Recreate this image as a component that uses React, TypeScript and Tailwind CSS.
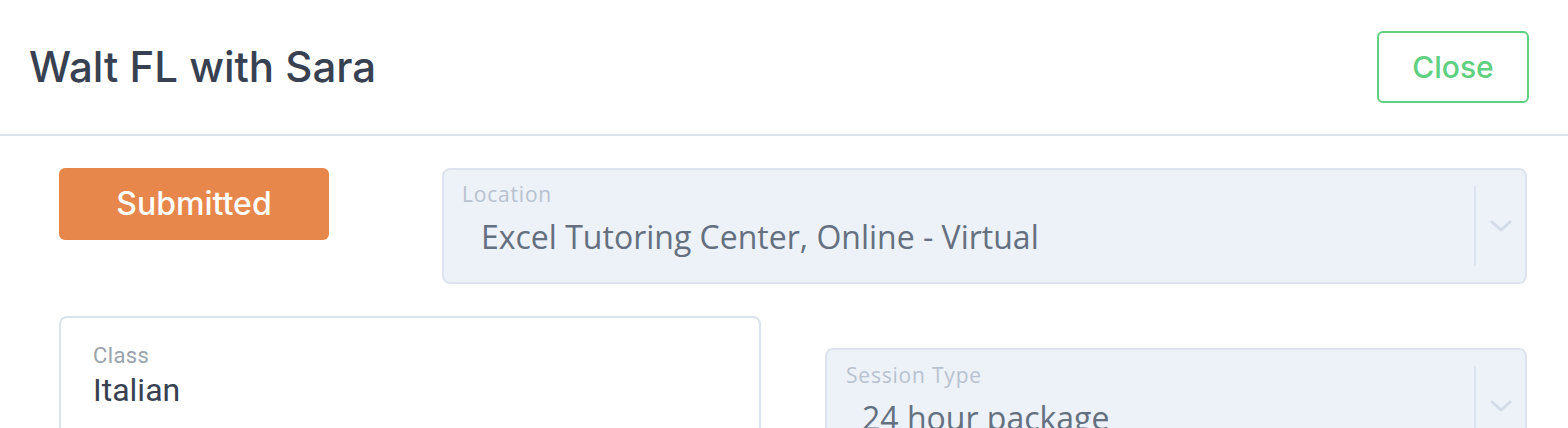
import React from "react";

function Chevron() {
  return (
    <svg width="22" height="12" viewBox="0 0 22 12" fill="none">
      <path d="M2 2 L11 10 L20 2" stroke="#d3dbe6" strokeWidth="3" strokeLinecap="round" strokeLinejoin="round" />
    </svg>
  );
}

export default function App() {
  return (
    <div className="w-[1568px] h-[428px] overflow-hidden bg-white">
      <div className="h-[136px] flex items-center justify-between pl-[29px] pr-[39px] border-b-2 border-[#dae4ee]">
        <h1 className="text-[42px] text-[#374151] font-[Inter,sans-serif] font-medium leading-none">Walt FL with Sara</h1>
        <button className="w-[152px] h-[72px] rounded-md border-2 border-[#5fcf80] text-[#5fcf80] text-[30px] font-[Inter,sans-serif] font-medium">Close</button>
      </div>
      <div className="pl-[59px] pr-[41px] pt-[32px] flex flex-col gap-[32px]">
        <div className="flex items-start justify-between">
          <div className="w-[270px] h-[72px] rounded-md bg-[#e8874c] text-white text-[32px] font-[Inter,sans-serif] font-medium flex items-center justify-center">Submitted</div>
          <div className="w-[1085px] h-[116px] rounded-lg bg-[#edf1f8] border-2 border-[#dde4ee] flex">
            <div className="flex-1 pl-[18px] pt-[14px] font-['Open_Sans',sans-serif]">
              <div className="text-[21px] tracking-[0.8px] text-[#b8c2cf] leading-none">Location</div>
              <div className="text-[32px] text-[#64707f] leading-none mt-[16px] pl-[19px]">Excel Tutoring Center, Online - Virtual</div>
            </div>
            <div className="w-[2px] bg-[#dbe3ee] my-[16px]" />
            <div className="w-[49px] flex items-center justify-center"><Chevron /></div>
          </div>
        </div>
        <div className="flex items-start justify-between">
          <div className="w-[702px] h-[120px] rounded-lg border-2 border-[#dbe3ee] bg-white pl-[32px] pt-[27px] font-[Roboto,sans-serif]">
            <div className="text-[22px] tracking-[0.4px] text-[#9aa3ae] leading-none">Class</div>
            <div className="text-[32px] text-[#374151] leading-none mt-[7px]">Italian</div>
          </div>
          <div className="mt-[32px] w-[702px] h-[116px] rounded-lg bg-[#edf1f8] border-2 border-[#dde4ee] flex">
            <div className="flex-1 pl-[19px] pt-[15px] font-['Open_Sans',sans-serif]">
              <div className="text-[21px] tracking-[0.8px] text-[#b8c2cf] leading-none">Session Type</div>
              <div className="text-[32px] text-[#64707f] leading-none mt-[16px] pl-[16px]">24 hour package</div>
            </div>
            <div className="w-[2px] bg-[#dbe3ee] my-[16px]" />
            <div className="w-[49px] flex items-center justify-center"><Chevron /></div>
          </div>
        </div>
      </div>
    </div>
  );
}
